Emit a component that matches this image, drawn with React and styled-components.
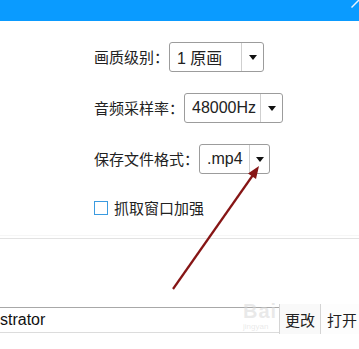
import React from "react";
import styled, { createGlobalStyle } from "styled-components";

const GlobalStyle = createGlobalStyle`
  html, body { margin: 0; padding: 0; background: #fff; }
  body { font-family: "Noto Sans CJK SC", "Liberation Sans", sans-serif; }
`;

const Frame = styled.div`
  position: relative;
  width: 359px;
  height: 349px;
  overflow: hidden;
  background: #fff;
`;

const TitleBar = styled.div`
  height: 21px;
  background: #0a9bff;
  display: flex;
  justify-content: flex-end;
`;

const Form = styled.div`
  display: flex;
  flex-direction: column;
  padding: 21px 0 0 94px;
`;

const Row = styled.div`
  display: flex;
  align-items: center;
  height: 30px;
  margin-bottom: ${(p) => p.$gap}px;
`;

const Label = styled.span`
  font-family: "Noto Sans CJK SC", sans-serif;
  font-size: 15px;
  color: #222;
  line-height: 30px;
  white-space: nowrap;
`;

const Select = styled.div`
  display: flex;
  height: 30px;
  box-sizing: border-box;
  border: 1px solid #9c9c9c;
  border-radius: 3px;
  background: #fff;
`;

const Value = styled.div`
  width: ${(p) => p.$w}px;
  box-sizing: border-box;
  padding-left: 7px;
  display: flex;
  align-items: center;
  font-family: "Liberation Sans", "Noto Sans CJK SC", sans-serif;
  font-size: 16px;
  color: #222;
  white-space: nowrap;
`;

const ArrowPart = styled.div`
  width: ${(p) => p.$w}px;
  box-sizing: border-box;
  border-left: 1px solid #cfcfcf;
  display: flex;
  align-items: center;
  justify-content: center;
  &::after {
    content: "";
    width: 0;
    height: 0;
    border-left: 4.5px solid transparent;
    border-right: 4.5px solid transparent;
    border-top: 5px solid #111;
  }
`;

const CheckRow = styled.div`
  display: flex;
  align-items: center;
  height: 20px;
  margin-top: 3px;
  gap: 6px;
`;

const Box = styled.span`
  width: 14px;
  height: 14px;
  box-sizing: border-box;
  border: 1.5px solid #3b9be0;
  background: #fff;
`;

const Separator = styled.div`
  margin-top: 20px;
  height: 1px;
  background: #e2e2e2;
  box-shadow: 0 -3px 0 #f6f6f6;
`;

const PathRow = styled.div`
  margin-top: 65px;
  height: 30px;
  display: flex;
`;

const PathInput = styled.div`
  width: 287px;
  height: 26px;
  margin-top: 3px;
  box-sizing: border-box;
  border-top: 1px solid #a8a8a8;
  border-bottom: 1px solid #dcdcdc;
  display: flex;
  align-items: center;
  font-family: "Liberation Sans", sans-serif;
  font-size: 16px;
  color: #111;
  white-space: nowrap;
  overflow: hidden;
`;

const Btn = styled.div`
  width: ${(p) => p.$w}px;
  box-sizing: border-box;
  border-left: 1px solid #d4d4d4;
  background: ${(p) => p.$bg};
  display: flex;
  align-items: center;
  padding-left: ${(p) => p.$pl}px;
  font-family: "Noto Sans CJK SC", sans-serif;
  font-size: 15px;
  color: #222;
  white-space: nowrap;
`;

const Overlay = styled.svg`
  position: absolute;
  left: 0;
  top: 0;
  pointer-events: none;
`;

const Watermark = styled.div`
  position: absolute;
  left: 243px;
  top: 300px;
  display: flex;
  flex-direction: column;
  pointer-events: none;
  color: rgba(215, 215, 215, 0.55);
  font-family: "Liberation Sans", sans-serif;
`;

const WmBig = styled.span`
  font-size: 20px;
  font-weight: bold;
  letter-spacing: 1px;
  line-height: 22px;
`;

const WmSmall = styled.span`
  font-size: 8px;
  line-height: 10px;
`;

function Dropdown({ value, valueW, arrowW }) {
  return (
    <Select>
      <Value $w={valueW}>{value}</Value>
      <ArrowPart $w={arrowW} />
    </Select>
  );
}

export default function App() {
  return (
    <>
      <GlobalStyle />
      <Frame>
        <TitleBar>
          <svg width="8" height="21" viewBox="0 0 8 21">
            <line x1="0.5" y1="7.5" x2="8" y2="0" stroke="#e8f4ff" strokeWidth="1.5" />
          </svg>
        </TitleBar>
        <Form>
          <Row $gap={21}>
            <Label>画质级别：</Label>
            <Dropdown value="1 原画" valueW={71} arrowW={22} />
          </Row>
          <Row $gap={21}>
            <Label>音频采样率：</Label>
            <Dropdown value="48000Hz" valueW={75} arrowW={22} />
          </Row>
          <Row $gap={21}>
            <Label>保存文件格式：</Label>
            <Dropdown value=".mp4" valueW={49} arrowW={20} />
          </Row>
          <CheckRow>
            <Box />
            <Label>抓取窗口加强</Label>
          </CheckRow>
        </Form>
        <Separator />
        <PathRow>
          <PathInput>strator</PathInput>
          <Btn $w={42} $bg="#f9f9f9" $pl={5}>更改</Btn>
          <Btn $w={40} $bg="#fdfdfd" $pl={6}>打开</Btn>
        </PathRow>
        <Watermark>
          <WmBig>Bai</WmBig>
          <WmSmall>jingyan</WmSmall>
        </Watermark>
        <Overlay width="359" height="349" viewBox="0 0 359 349">
          <line x1="173" y1="289" x2="253" y2="175" stroke="#861515" strokeWidth="2.2" />
          <polygon points="259,166 256,179 248,173.5" fill="#861515" />
        </Overlay>
      </Frame>
    </>
  );
}
